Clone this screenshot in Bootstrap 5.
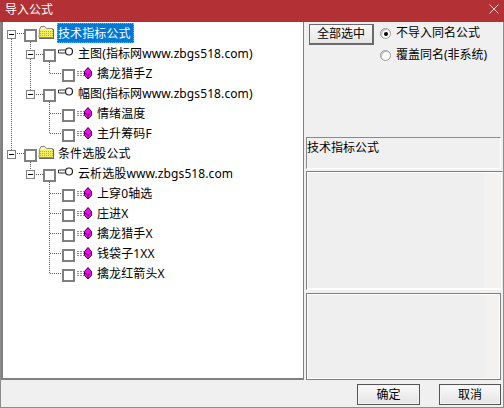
<!DOCTYPE html>
<html lang="zh"><head><meta charset="utf-8"><title>导入公式</title>
<link href="https://cdn.jsdelivr.net/npm/bootstrap@5.3.0/dist/css/bootstrap.min.css" rel="stylesheet">
<style>
html,body{margin:0;width:504px;height:408px;overflow:hidden;background:#f0f0f0}
body{font:12px/16px "Noto Sans","Noto Sans CJK SC",sans-serif;color:#000}
.dlg{width:504px;height:408px;border:1px solid #8c8c8c;border-top:0}
.ttl{height:22px;margin:0 -1px;background:#b33034;color:#fff;padding:0 5px 2px;flex:none}
.ttl svg{margin-bottom:3px}
.mainp{height:358px;flex:none}
.tree{width:303px;background:#fff;border:2px solid #808080;border-width:0 1px 2px 2px;padding-top:1px;position:relative;flex:none}
.lines{position:absolute;left:0;top:0;pointer-events:none}
.tr{height:20px}
.l0{padding-left:4px}.l1{padding-left:23px}.l2{padding-left:59px}
.ex{width:9px;height:9px;border:1px solid #808080;background:#fff;flex:none;margin:7px 8px 0 0;position:relative;align-self:flex-start}
.ex::after{content:"";position:absolute;left:1px;right:1px;top:3px;height:1px;background:#000}
.cbx{width:13px;height:13px;border:2.5px solid #808080;background:#fff;flex:none;margin:6px 2px 0 0;align-self:flex-start}
.l0 .cbx{margin-right:1px}
.ic{flex:none;width:16px;height:16px;margin:2px 3px 0 0;align-self:flex-start}
.lab{white-space:nowrap;padding:0 1px;height:20px;line-height:22px;letter-spacing:.1px}
.sel{background:#0078d7;color:#fff;outline:1px dotted #e89a20;outline-offset:-1px;padding:0 3px 0 1px}
.side{width:199px;padding-left:2px;flex:none}
.wbtn{background:linear-gradient(#f8f8f8,#e6e6e6);border:1px solid #6a6a6a;border-bottom-width:2px;border-right-width:2px;padding:0;font-size:12px;line-height:16px;color:#000;height:21px;border-radius:0}
.allb{width:65px;margin:2px 0 0 3px}
.rd{height:22px;white-space:nowrap}
.rad{width:11px;height:11px;border-radius:50%;background:#fff;border:1px solid #9a9a9a;box-shadow:inset 1px 1px 1px #bbb;margin-right:5px;position:relative;flex:none}
.rad.on::after{content:"";position:absolute;left:3px;top:3px;width:4px;height:4px;background:#000;border-radius:50%}
.opts{margin-left:6px}
.topz{height:115px}
.pn{border:1px solid;border-color:#8a8a8a #fff #fff #8a8a8a}
.p1{height:32px;width:195px;line-height:17px;padding-top:1px}
.p2{height:119px;width:197px;margin-top:2px;border:1px solid #7f7f7f;border-color:#7f7f7f #e8e8e8 #fff #7f7f7f;background:linear-gradient(90deg,#efefef 91%,#f3f2f0 91%);box-shadow:inset 0 0 0 1px #fff}
.p3{height:87px;width:195px;margin-top:3px;border:1px solid #7f7f7f;background:linear-gradient(90deg,#efefef 92%,#f3f2f0 92%);box-shadow:inset 0 0 0 1px #fff}
.foot{height:28px;padding:4px 2px 0 0;gap:19px}
.fb{width:63px;height:21px;border:1px solid #555;background:linear-gradient(#fafafa,#e4e4e4);box-shadow:inset 0 0 0 1px #f4f4f4}
.fb2{width:62px}
</style></head>
<body>
<svg width="0" height="0" class="d-block"><defs>
<pattern id="chk" width="2" height="2" patternUnits="userSpaceOnUse"><rect width="2" height="2" fill="#f6f060"/><rect width="1" height="1" fill="#a8a878"/></pattern>
<symbol id="fold" viewBox="0 0 16 16"><path d="M1.500 4.500l1.500-3h4l1.500 2h6v9h-13.500z" fill="#f4f0d0" stroke="#8a8a78"/><rect x="2" y="5" width="13" height="7" fill="url(#chk)"/><path d="M1 13.500h15M15.500 4v9" stroke="#666"/></symbol>
<symbol id="key" viewBox="0 0 16 16"><path d="M.5 5h6.500M.5 8H7M.5 5v3" stroke="#333" fill="none"/><circle cx="11" cy="6.500" r="3.500" fill="#fff" stroke="#222" stroke-width="1.200"/></symbol>
<symbol id="gem" viewBox="0 0 16 16"><path d="M0 6.500h7M0 8.500h7M0 10.500h7" stroke="#909090" stroke-dasharray="2 1"/><path d="M11 2.500l3.500 4v4L11 14l-3.500-3.500v-4z" fill="#ff00ff" stroke="#300030"/><path d="M8 8l3 2 3-2M11 10v3.500" stroke="#800080" fill="none"/></symbol>
</defs></svg>
<div class="dlg d-flex flex-column">
<div class="ttl d-flex align-items-center justify-content-between"><span>导入公式</span>
<svg width="10" height="10" viewBox="0 0 10 10"><path d="M.5.500l9 9M9.500.500l-9 9" stroke="#f4dcdc" fill="none"/></svg></div>
<div class="mainp d-flex">
<div class="tree">
<svg class="lines" width="120" height="280"><g transform="translate(-3 -22)" stroke="#606060" stroke-dasharray="1 1" fill="none" shape-rendering="crispEdges">
<path d="M11.500 39V150M17 33.500h7M17 153.500h7"/>
<path d="M30.500 42V50M30.500 59V90M30.500 162V170"/>
<path d="M36 54.500h7M36 94.500h7M36 174.500h7"/>
<path d="M49.500 62V73.500H62M49.500 102V133.500H62M49.500 113.500H62M49.500 182V273.500H62M49.500 193.500H62M49.500 213.500H62M49.500 233.500H62M49.500 253.500H62"/>
</g></svg>
<div class="tr l0 d-flex"><span class="ex"></span><span class="cbx"></span><svg class="ic"><use href="#fold"/></svg><span class="lab sel">技术指标公式</span></div>
<div class="tr l1 d-flex"><span class="ex"></span><span class="cbx"></span><svg class="ic"><use href="#key"/></svg><span class="lab">主图(指标网www.zbgs518.com)</span></div>
<div class="tr l2 d-flex"><span class="cbx"></span><svg class="ic"><use href="#gem"/></svg><span class="lab">擒龙猎手Z</span></div>
<div class="tr l1 d-flex"><span class="ex"></span><span class="cbx"></span><svg class="ic"><use href="#key"/></svg><span class="lab">幅图(指标网www.zbgs518.com)</span></div>
<div class="tr l2 d-flex"><span class="cbx"></span><svg class="ic"><use href="#gem"/></svg><span class="lab">情绪温度</span></div>
<div class="tr l2 d-flex"><span class="cbx"></span><svg class="ic"><use href="#gem"/></svg><span class="lab">主升筹码F</span></div>
<div class="tr l0 d-flex"><span class="ex"></span><span class="cbx"></span><svg class="ic"><use href="#fold"/></svg><span class="lab">条件选股公式</span></div>
<div class="tr l1 d-flex"><span class="ex"></span><span class="cbx"></span><svg class="ic"><use href="#key"/></svg><span class="lab">云析选股www.zbgs518.com</span></div>
<div class="tr l2 d-flex"><span class="cbx"></span><svg class="ic"><use href="#gem"/></svg><span class="lab">上穿0轴选</span></div>
<div class="tr l2 d-flex"><span class="cbx"></span><svg class="ic"><use href="#gem"/></svg><span class="lab">庄进X</span></div>
<div class="tr l2 d-flex"><span class="cbx"></span><svg class="ic"><use href="#gem"/></svg><span class="lab">擒龙猎手X</span></div>
<div class="tr l2 d-flex"><span class="cbx"></span><svg class="ic"><use href="#gem"/></svg><span class="lab">钱袋子1XX</span></div>
<div class="tr l2 d-flex"><span class="cbx"></span><svg class="ic"><use href="#gem"/></svg><span class="lab">擒龙红箭头X</span></div>
</div>
<div class="side">
<div class="topz d-flex">
<button type="button" class="wbtn allb">全部选中</button>
<div class="opts">
<div class="rd d-flex align-items-center"><span class="rad on"></span>不导入同名公式</div>
<div class="rd d-flex align-items-center"><span class="rad"></span>覆盖同名(非系统)</div>
</div>
</div>
<div class="pn p1">技术指标公式</div>
<div class="p2"></div>
<div class="p3"></div>
</div>
</div>
<div class="foot d-flex justify-content-end">
<button type="button" class="wbtn fb">确定</button>
<button type="button" class="wbtn fb fb2">取消</button>
</div>
</div>
</body></html>
